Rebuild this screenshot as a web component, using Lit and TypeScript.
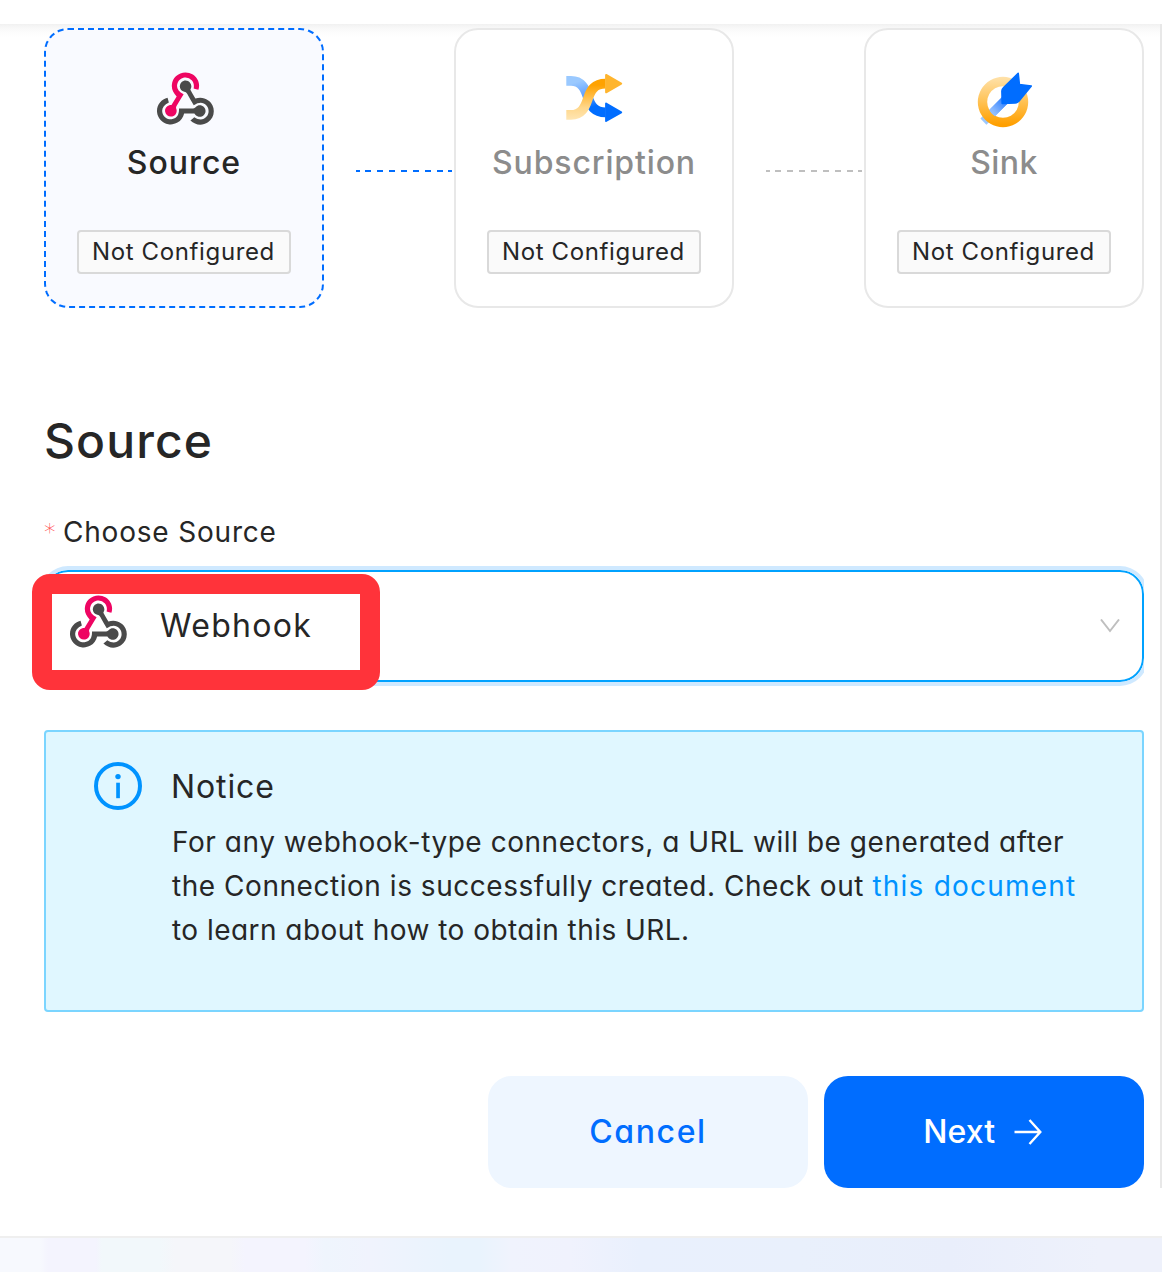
import { LitElement, html, css, svg } from "lit";
import { customElement, property } from "lit/decorators.js";

const webhookIcon = html`<svg width="57" height="53" viewBox="0 -1 256 241" preserveAspectRatio="none">
  <path fill="#ee0562" d="M119.54 100.503c-10.61 17.836-20.775 35.109-31.152 52.25-2.665 4.401-3.984 7.986-1.855 13.58 5.878 15.454-2.414 30.493-17.998 34.575-14.697 3.851-29.016-5.808-31.932-21.543-2.584-13.927 8.224-27.58 23.58-29.757 1.286-.184 2.6-.205 4.762-.367l23.358-39.168C73.612 95.465 64.868 78.39 66.803 57.23c1.368-14.957 7.25-27.883 18-38.477 20.59-20.288 52.002-23.573 76.246-8.001 23.284 14.958 33.948 44.094 24.858 69.031-6.854-1.858-13.756-3.732-21.343-5.79 2.854-13.865.743-26.315-8.608-36.981-6.178-7.042-14.106-10.733-23.12-12.093-18.072-2.73-35.815 8.88-41.08 26.618-5.976 20.13 3.069 36.575 27.784 48.967z"/>
  <path fill="#4a4a4a" d="M149.841 79.41c7.475 13.187 15.065 26.573 22.587 39.836 38.02-11.763 66.686 9.284 76.97 31.817 12.422 27.219 3.93 59.457-20.465 76.25-25.04 17.238-56.707 14.293-78.892-7.851 5.654-4.733 11.336-9.487 17.407-14.566 21.912 14.192 41.077 13.524 55.305-3.282 12.133-14.337 11.87-35.714-.615-49.75-14.408-16.197-33.707-16.691-57.035-1.143-9.677-17.168-19.522-34.199-28.893-51.491-3.16-5.828-6.648-9.21-13.77-10.443-11.893-2.062-19.571-12.275-20.032-23.717-.453-11.316 6.214-21.545 16.634-25.53 10.322-3.949 22.435-.762 29.378 8.014 5.674 7.17 7.477 15.24 4.491 24.083-.83 2.466-1.905 4.852-3.07 7.774z"/>
  <path fill="#4a4a4a" d="M167.707 187.21h-45.77c-4.387 18.044-13.863 32.612-30.19 41.876-12.693 7.2-26.373 9.641-40.933 7.29-26.808-4.323-48.728-28.456-50.658-55.63-2.184-30.784 18.975-58.147 47.178-64.293 1.947 7.071 3.915 14.21 5.862 21.264-25.876 13.202-34.832 29.836-27.59 50.636 6.375 18.304 24.484 28.337 44.147 24.457 20.08-3.962 30.204-20.65 28.968-47.432 19.036 0 38.088-.197 57.126.097 7.434.117 13.173-.654 18.773-7.208 9.22-10.784 26.191-9.811 36.121.374 10.148 10.409 9.662 27.157-1.077 37.127-10.361 9.62-26.73 9.106-36.424-1.26-1.992-2.136-3.562-4.673-5.533-7.298z"/>
</svg>`;

const subscriptionIcon = html`<svg width="80" height="75" viewBox="0 0 80 75">
  <defs>
    <linearGradient id="blue" gradientUnits="userSpaceOnUse" x1="24" y1="17" x2="36" y2="56">
      <stop offset="0.1" stop-color="#9ac9ff"/><stop offset="0.5" stop-color="#5c9dff"/><stop offset="0.8" stop-color="#006dff"/>
    </linearGradient>
    <linearGradient id="gold" gradientUnits="userSpaceOnUse" x1="32" y1="60" x2="32" y2="19">
      <stop offset="0" stop-color="#ffe6b4"/><stop offset="0.3" stop-color="#ffd78b"/><stop offset="0.85" stop-color="#ffa200"/>
    </linearGradient>
  </defs>
  <path d="M11.3 20.9H16C26.5 20.9 30 28.5 32.6 36.5C35.6 46 39.5 52.3 50.5 52.3" fill="none" stroke="url(#blue)" stroke-width="9.8"/>
  <path d="M11.3 54.9H16C26.5 54.9 30 47.5 32.8 39C35.6 30 39.5 23.7 50.5 23.7" fill="none" stroke="url(#gold)" stroke-width="9.8"/>
  <path d="M51.1 14.9L66.2 23.6L51.1 32.3Z" fill="#ffb52e" stroke="#ffb52e" stroke-width="2" stroke-linejoin="round"/>
  <path d="M51.1 43.6L66.2 52.3L51.1 61Z" fill="#006dff" stroke="#006dff" stroke-width="2" stroke-linejoin="round"/>
</svg>`;

const sinkIcon = html`<svg width="80" height="75" viewBox="0 0 80 75">
  <defs>
    <linearGradient id="ring" x1="0" y1="0" x2="0" y2="1">
      <stop offset="0" stop-color="#ffe2ab"/><stop offset="0.45" stop-color="#ffc55c"/><stop offset="0.95" stop-color="#ff9f00"/>
    </linearGradient>
    <linearGradient id="cable" gradientUnits="userSpaceOnUse" x1="22" y1="58" x2="40" y2="40">
      <stop offset="0" stop-color="#9cc8ff"/><stop offset="0.35" stop-color="#8fbcff"/><stop offset="1" stop-color="#2e80ff"/>
    </linearGradient>
  </defs>
  <path d="M18.4 61.6L41 39" stroke="url(#cable)" stroke-width="8.6" fill="none"/>
  <path d="M38 16.8a25.2 25.2 0 1 0 .01 0zM38 26.2a15.8 15.8 0 1 1-.01 0z" fill="url(#ring)" fill-rule="evenodd"/>
  <path d="M36 40.8L42 34.8L46 40L30 56.3A15.8 15.8 0 0 1 25 51.2Z" fill="url(#cable)"/>
  <path d="M53.2 13.3L54.4 24.6L66.3 26L53.8 41.2Q52.3 42.8 50.2 42.9L37.2 43.4L36.9 31Q37 29.2 38.4 27.9Z" fill="#006dff" stroke="#006dff" stroke-width="1.6" stroke-linejoin="round"/>
</svg>`;

const infoIcon = html`<svg width="48" height="48" viewBox="0 0 48 48">
  <circle cx="24" cy="24" r="22" fill="none" stroke="#0093ff" stroke-width="4"/>
  <circle cx="24" cy="14.6" r="2.7" fill="#0093ff"/>
  <rect x="22.2" y="20.7" width="3.7" height="15.5" fill="#0093ff"/>
</svg>`;

@customElement("step-link")
export class StepLink extends LitElement {
  @property() color = "#bfbfbf";

  static styles = css`
    :host { display: block; width: 98px; height: 2px; margin: 142px 0 0 32px; }
    svg { display: block; }
  `;

  render() {
    return html`<svg width="98" height="2">${svg`<path d="M0 1H96" stroke=${this.color} stroke-width="2" stroke-dasharray="4 5 6 6 6 6 6 6 6 6 6 6 6 6 6 5 4 0"/>`}</svg>`;
  }
}

@customElement("app-root")
export class AppRoot extends LitElement {
  static styles = css`
    :host {
      display: block;
      height: 1272px;
      overflow: hidden;
      background: #fff;
      color: #262626;
      font-family: Inter, "Noto Sans", sans-serif;
      font-feature-settings: "cv11";
      font-size: 32px;
      white-space: nowrap;
    }
    * { box-sizing: border-box; }
    svg { display: block; flex: none; }
    .top { height: 24px; }
    .panel {
      height: 1164px;
      padding: 4px 16px 0 44px;
      border-right: 2px solid #e8e8e8;
      background: linear-gradient(#f1f1f1 0, #f8f8f8 4px, #fdfdfd 9px, #fff 13px) no-repeat;
    }
    .steps { display: flex; align-items: flex-start; }
    .card {
      width: 280px;
      height: 280px;
      flex: none;
      display: flex;
      flex-direction: column;
      align-items: center;
      border: 2px solid #e8e8e8;
      border-radius: 24px;
      background: #fff;
      color: #8c8c8c;
    }
    .card.active { border: 2px dashed #006dff; background: #f9faff; color: #262626; }
    .icon { height: 56px; margin-top: 42px; display: flex; justify-content: center; }
    .icon.hook { padding-left: 2px; }
    .icon.wide { height: 75px; margin: 30px 0 -7px; padding-left: 2px; }
    .label { margin-top: 13px; line-height: 44px; font-weight: 500; letter-spacing: 1px; }
    .label.sub { letter-spacing: 0.86px; }
    .label.snk { letter-spacing: 0.4px; }
    .tag {
      width: 214px;
      height: 44px;
      margin-top: 45px;
      padding-left: 13px;
      border: 2px solid #d9d9d9;
      border-radius: 4px;
      background: #fafafa;
      color: #262626;
      font-size: 24px;
      line-height: 39px;
      letter-spacing: 0.63px;
    }
    h1 { margin: 103px 0 0; font-size: 48px; line-height: 60px; font-weight: 500; letter-spacing: 1.1px; }
    .field-label { display: flex; margin-top: 39px; font-size: 28px; line-height: 44px; letter-spacing: 0.8px; }
    .required { width: 19px; color: #ff4d4f; font: 200 23px/45px "DejaVu Sans", sans-serif; letter-spacing: 0; }
    .field-label, .required { height: 44px; }
    .select {
      position: relative;
      display: flex;
      align-items: center;
      height: 112px;
      margin-top: 16px;
      padding: 0 22px 0 24px;
      border: 2px solid #00a2ff;
      border-radius: 24px;
    }
    .select::before {
      content: "";
      position: absolute;
      inset: -2px;
      border-radius: 24px;
      box-shadow: 0 0 0 4px #cfe9ff;
      clip-path: inset(-4px 0);
    }
    .marker {
      position: absolute;
      left: -14px;
      top: 2px;
      width: 348px;
      height: 116px;
      border: 20px solid #ff333a;
      border-radius: 18px;
      background: #fff;
    }
    .value { position: relative; display: flex; flex: 1; gap: 33px; line-height: 54px; letter-spacing: 1.3px; margin-top: -4px; }
    .value span { padding-top: 4px; }
    .notice {
      display: flex;
      gap: 30px;
      height: 282px;
      margin-top: 48px;
      padding: 30px 0 0 48px;
      border: 2px solid #7bd5ff;
      border-radius: 4px;
      background: #e0f7ff;
    }
    .title { line-height: 49px; letter-spacing: 0.9px; margin-left: -1px; }
    .body { margin-top: 9px; font-size: 28px; line-height: 44px; letter-spacing: 0.54px; }
    .last { letter-spacing: 0.46px; }
    a { color: #0093ff; letter-spacing: 1.22px; text-decoration: none; }
    .actions { display: flex; justify-content: flex-end; gap: 16px; margin-top: 64px; }
    .button {
      display: flex;
      align-items: center;
      justify-content: center;
      width: 320px;
      height: 112px;
      padding-bottom: 1px;
      border-radius: 24px;
      background: #eef6ff;
      color: #006dff;
      font-weight: 500;
      letter-spacing: 1.6px;
    }
    .button.primary { gap: 18.5px; background: #006dff; color: #fff; letter-spacing: 0.15px; }
    .footer {
      height: 36px;
      margin-top: 48px;
      border-top: 2px solid #efefef;
      background: linear-gradient(90deg, #f7f9fe 40px, #f4f4fe 48px, #f4f4fe 96px, #f2f8fb 102px, #f2f8fb 160px, #f5f6fa 175px, #f5f6fa 230px, #f4f4fe 245px, #f4f4fe 305px, #eff5fd 325px, #f0f3fd 370px, #e9f3fd 450px, #e9f3fd 480px, #f0f3fd 510px, #f0f2fd 570px, #e9f0fd 640px, #e9f0fc 800px, #e9eefb 950px, #eef1fb 1100px);
    }
  `;

  render() {
    return html`
      <div class="top"></div>
      <div class="panel">
        <div class="steps">
          <div class="card active">
            <div class="icon hook">${webhookIcon}</div>
            <div class="label">Source</div>
            <div class="tag">Not Configured</div>
          </div>
          <step-link color="#006dff"></step-link>
          <div class="card">
            <div class="icon wide">${subscriptionIcon}</div>
            <div class="label sub">Subscription</div>
            <div class="tag">Not Configured</div>
          </div>
          <step-link></step-link>
          <div class="card">
            <div class="icon wide">${sinkIcon}</div>
            <div class="label snk">Sink</div>
            <div class="tag">Not Configured</div>
          </div>
        </div>
        <h1>Source</h1>
        <div class="field-label"><span class="required">*</span><span>Choose Source</span></div>
        <div class="select">
          <div class="marker"></div>
          <div class="value">${webhookIcon}<span>Webhook</span></div>
          <svg width="20" height="14" viewBox="0 0 20 14"><path d="M1 .5L10 12L19 .5" fill="none" stroke="#bfbfbf" stroke-width="2"/></svg>
        </div>
        <div class="notice">
          ${infoIcon}
          <div>
            <div class="title">Notice</div>
            <div class="body">
              <div>For any webhook-type connectors, a URL will be generated after</div>
              <div>the Connection is successfully created. Check out <a>this document</a></div>
              <div class="last">to learn about how to obtain this URL.</div>
            </div>
          </div>
        </div>
        <div class="actions">
          <div class="button">Cancel</div>
          <div class="button primary">Next<svg width="31" height="26" viewBox="0 0 31 26"><path d="M.5 13H26M15.5 1L26.3 13L15.5 25" fill="none" stroke="#fff" stroke-width="2.4"/></svg></div>
        </div>
      </div>
      <div class="footer"></div>
    `;
  }
}
